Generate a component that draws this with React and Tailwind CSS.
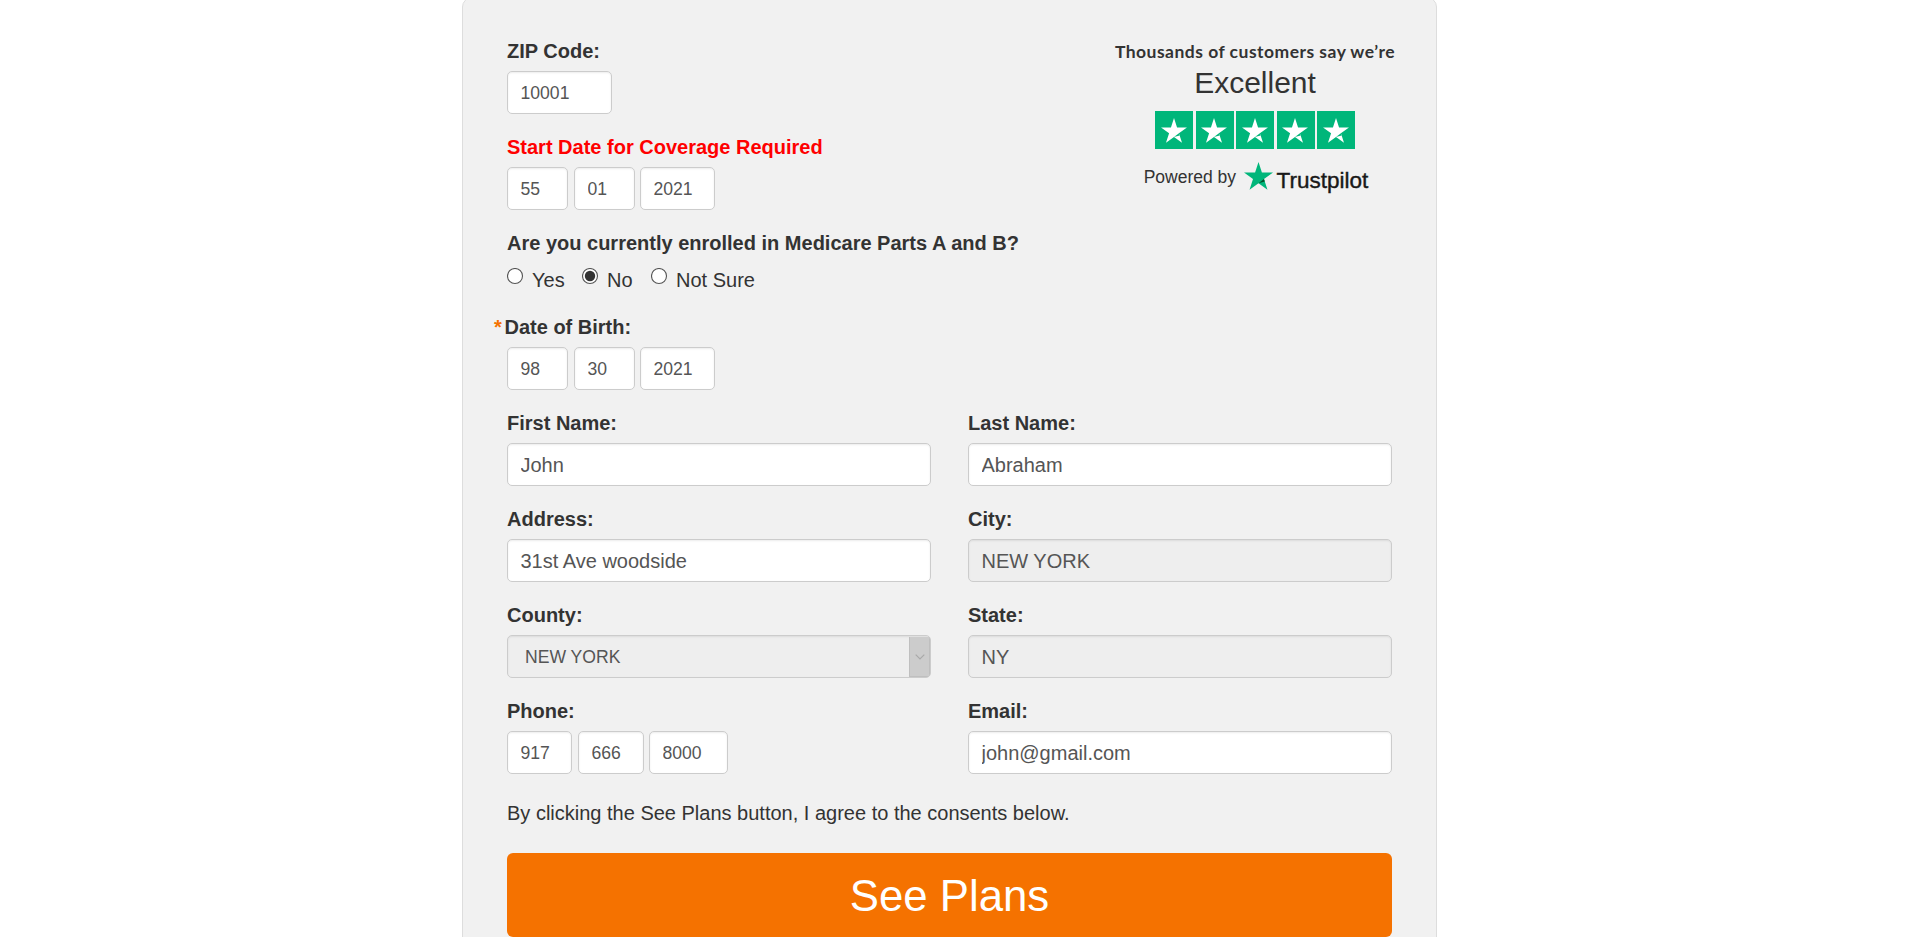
const inputBase =
  "h-[43px] rounded-[5px] border border-[#ccc] pt-[2px] pr-[8px] text-[#555] shadow-[inset_0_1px_2px_rgba(0,0,0,0.075)] outline-none";

function Label({ children, required, error }) {
  return (
    <label className={`flex h-[28px] items-center text-[20px] leading-[28px] font-bold whitespace-pre ${error ? "text-[#f00]" : "text-[#333]"}`}>
      {required && <span className="-ml-[13px] w-[10.5px] text-[#f57200]">*</span>}
      {children}
    </label>
  );
}

function Field({ label, value, disabled }) {
  return (
    <div className="flex w-[424px] flex-col gap-[6px]">
      <Label>{label}</Label>
      <input
        defaultValue={value}
        readOnly={disabled}
        className={`${inputBase} w-full pl-[12.5px] text-[20px] ${disabled ? "bg-[#eee]" : "bg-white"}`}
      />
    </div>
  );
}

function SmallInput({ value, className }) {
  return <input defaultValue={value} className={`${inputBase} bg-white pl-[12.5px] text-[17.6px] ${className}`} />;
}

function Radio({ label, checked, className }) {
  return (
    <label className={`flex items-start ${className}`}>
      <svg className="mt-px mr-[8.5px] -ml-[0.5px] size-[17px] shrink-0" viewBox="0 0 17 17">
        <circle cx="8" cy="8" r="7.5" fill="#fff" stroke="#555" strokeWidth="1.1" />
        {checked && <circle cx="8" cy="8" r="5.2" fill="#333" />}
      </svg>
      <span className="text-[20px] leading-[26px]">{label}</span>
    </label>
  );
}

function Star({ className, fill, cut }) {
  return (
    <svg className={className} viewBox="0 0 28 27">
      <path
        d="M14 0 L17.3 10.2 H28 L19.3 16.5 L22.65 26.7 L14 20.4 L5.35 26.7 L8.7 16.5 L0 10.2 H10.7 Z"
        fill={fill}
      />
      <path d="M20.05 18.8 L19.3 16.5 L14 20.4 Z" fill={cut} />
    </svg>
  );
}

function Trustpilot() {
  return (
    <div className="flex w-[290px] flex-col items-center">
      <div className="h-[22px] font-[Lato,sans-serif] text-[17.5px] leading-[22px] font-bold tracking-[0.48px] whitespace-nowrap">
        Thousands of customers say we’re
      </div>
      <div className="h-[40px] text-[30px] leading-[40px]">Excellent</div>
      <div className="mt-[8px] flex gap-[2.5px]">
        {[0, 1, 2, 3, 4].map((i) => (
          <div key={i} className="flex h-[38px] w-[38px] items-center justify-center bg-[#00b67a]">
            <Star className="mr-px h-[25px] w-[26px]" fill="#fff" cut="#00b67a" />
          </div>
        ))}
      </div>
      <div className="mt-[13px] flex items-start pl-[2px]">
        <span className="mt-[3px] text-[17.5px] leading-[24px]">Powered by</span>
        <Star className="ml-[8px] h-[28px] w-[29px]" fill="#00b67a" cut="#005128" />
        <span className="mt-[6px] ml-[3.5px] text-[22.5px] leading-[26px] text-[#191919] [-webkit-text-stroke:0.4px_#191919]">Trustpilot</span>
      </div>
    </div>
  );
}

export default function App() {
  return (
    <div className="h-[937px] w-full overflow-hidden bg-white font-['Liberation_Sans',Arial,sans-serif] text-[#333]">
      <form className="-mt-[3px] ml-[462px] h-[1000px] w-[975px] rounded-[10px] border border-[#ddd] bg-[#f1f1f1] px-[44px] pt-[39px]">
        <div className="flex h-[192px] justify-between">
          <div className="flex flex-col gap-[19px]">
            <div className="flex flex-col gap-[6px]">
              <Label>ZIP Code:</Label>
              <SmallInput value="10001" className="w-[105px]" />
            </div>
            <div className="flex flex-col gap-[6px]">
              <Label error>Start Date for Coverage Required</Label>
              <div className="flex">
                <SmallInput value="55" className="w-[61px]" />
                <SmallInput value="01" className="ml-[6px] w-[61px]" />
                <SmallInput value="2021" className="ml-[5px] w-[75px]" />
              </div>
            </div>
          </div>
          <div className="-mr-[8px] pt-[4px]">
            <Trustpilot />
          </div>
        </div>

        <Label>Are you currently enrolled in Medicare Parts A and B?</Label>
        <div className="mt-[10px] flex h-[46px]">
          <Radio label="Yes" className="w-[75px]" />
          <Radio label="No" checked className="w-[69px]" />
          <Radio label="Not Sure" className="" />
        </div>

        <div className="flex flex-col gap-[6px]">
          <Label required>Date of Birth:</Label>
          <div className="flex">
            <SmallInput value="98" className="w-[61px]" />
            <SmallInput value="30" className="ml-[6px] w-[61px]" />
            <SmallInput value="2021" className="ml-[5px] w-[75px]" />
          </div>
        </div>

        <div className="mt-[19px] grid grid-cols-[424px_424px] gap-x-[37px] gap-y-[19px]">
          <Field label="First Name:" value="John" />
          <Field label="Last Name:" value="Abraham" />
          <Field label="Address:" value="31st Ave woodside" />
          <Field label="City:" value="NEW YORK" disabled />
          <div className="flex flex-col gap-[6px]">
            <Label>County:</Label>
            <div className="flex h-[43px] w-[424px] items-stretch overflow-hidden rounded-[5px] border border-[#ccc] bg-[#eee] shadow-[inset_0_1px_2px_rgba(0,0,0,0.075)]">
              <span className="flex-1 pt-px pl-[17px] text-[17.6px] leading-[41px] text-[#555]">NEW YORK</span>
              <span className="mt-[1px] flex w-[21px] items-center justify-center border border-t-0 border-[#bfbfbf] bg-[#ccc]">
                <svg className="h-[6px] w-[10px]" viewBox="0 0 10 6" fill="none" stroke="#a9a9a9" strokeWidth="1.2">
                  <path d="M0.7 0.7 L5 5 L9.3 0.7" />
                </svg>
              </span>
            </div>
          </div>
          <Field label="State:" value="NY" disabled />
          <div className="flex flex-col gap-[6px]">
            <Label>Phone:</Label>
            <div className="flex">
              <SmallInput value="917" className="w-[65px]" />
              <SmallInput value="666" className="ml-[6px] w-[66px]" />
              <SmallInput value="8000" className="ml-[5px] w-[79px]" />
            </div>
          </div>
          <Field label="Email:" value="john@gmail.com" />
        </div>

        <p className="mt-[25px] h-[28px] text-[20px] leading-[28px]">
          By clicking the See Plans button, I agree to the consents below.
        </p>
        <button type="button" className="mt-[26px] h-[84px] w-full rounded-[6px] bg-[#f57200] pt-[2px] text-[43.75px] text-white">
          See Plans
        </button>
      </form>
    </div>
  );
}
